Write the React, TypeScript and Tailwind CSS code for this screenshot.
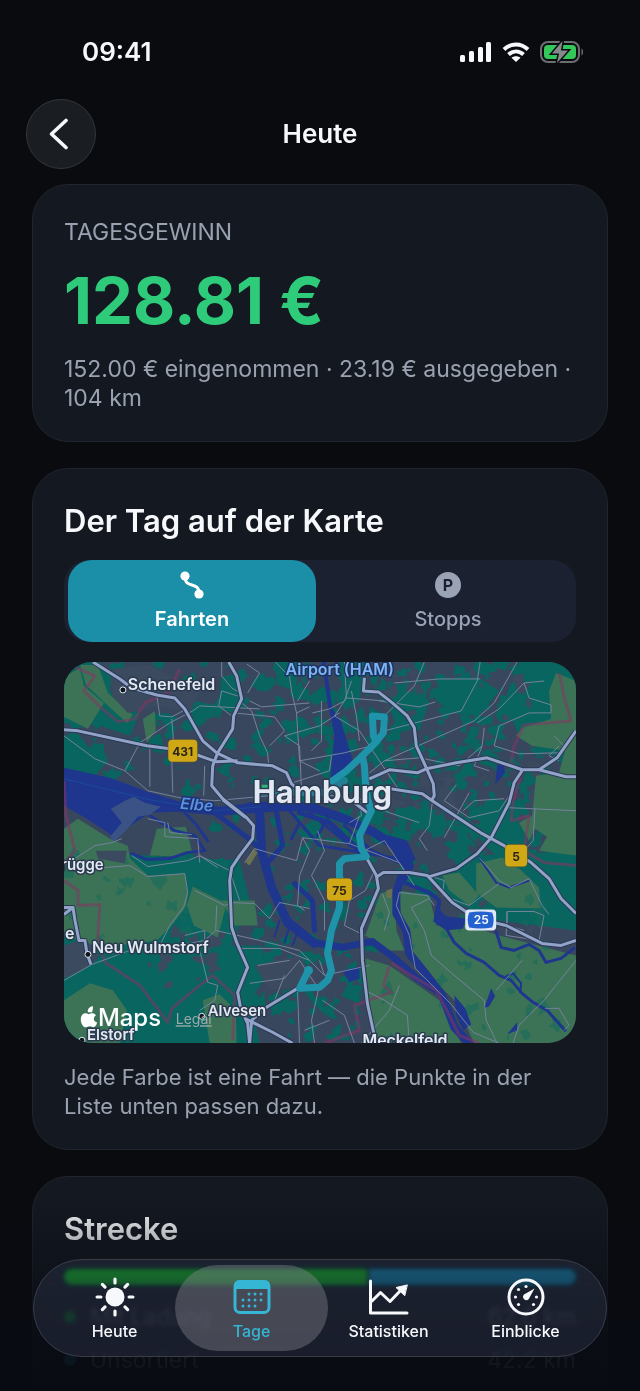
import { ReactNode, useState } from 'react';
import clsx from 'clsx';

type Point = [number, number];

interface PatchArea {
  seed: number;
  count: number;
  x: number;
  y: number;
  w: number;
  h: number;
  size: number;
}

// Small seeded generator so the parks look the same on every render
const random = (seed: number) => () => {
  seed = (seed * 16807) % 2147483647;
  return seed / 2147483647;
};

const makePatches = ({ seed, count, x, y, w, h, size }: PatchArea): string => {
  const next = random(seed);
  let d = '';
  for (let i = 0; i < count; i++) {
    const cx = x + next() * w;
    const cy = y + next() * h;
    const r = size * (0.3 + next() * 1.1);
    const points: Point[] = [];
    for (let k = 0; k < 9; k++) {
      const angle = (k / 9) * Math.PI * 2;
      const dist = r * (0.3 + next());
      points.push([Math.round(cx + Math.cos(angle) * dist), Math.round(cy + Math.sin(angle) * dist)]);
    }
    d += `M${points.map((p) => p.join(' ')).join('L')}Z`;
  }
  return d;
};

const parks = [
  { seed: 811, count: 110, x: 64, y: 661, w: 250, h: 130, size: 7 },
  { seed: 4207, count: 330, x: 300, y: 661, w: 277, h: 180, size: 7 },
  { seed: 991, count: 70, x: 180, y: 810, w: 210, h: 130, size: 6 },
  { seed: 5501, count: 60, x: 400, y: 810, w: 150, h: 90, size: 9 },
  { seed: 377, count: 70, x: 250, y: 940, w: 130, h: 103, size: 7 },
].map(makePatches);

const meadowPatches = [
  { seed: 1203, count: 20, x: 64, y: 850, w: 130, h: 90, size: 6 },
  { seed: 7207, count: 36, x: 380, y: 900, w: 190, h: 140, size: 6 },
].map(makePatches);

const townPatches = [
  { seed: 613, count: 14, x: 150, y: 920, w: 80, h: 70, size: 7 },
  { seed: 2909, count: 14, x: 420, y: 890, w: 150, h: 120, size: 6 },
  { seed: 4211, count: 40, x: 380, y: 670, w: 180, h: 150, size: 8 },
].map(makePatches);

const woods = [
  'M64 735L78 733L90 748L102 745L108 760L95 775L64 768Z',
  'M64 661L100 661L112 672L110 690L140 712L130 735L100 725L64 722Z',
  'M64 850L240 860L250 900L225 960L245 1000L240 1043L64 1043Z',
  'M215 945L262 945L268 975L250 1000L260 1043L200 1043Z',
  'M222 676L240 672L240 700L232 712L218 706Z',
  'M196 700L214 704L216 716L198 720L188 708Z',
  'M275 661L300 661L296 690L278 684Z',
  'M435 880L480 855L577 850L577 930L500 920L450 900Z',
  'M385 690L410 680L430 700L420 730L400 722Z',
  'M520 661L577 661L577 760L548 752L520 735L505 700Z',
  'M486 800L530 800L527 860L500 860L478 835Z',
  'M430 690L470 670L500 690L480 715L450 712Z',
  'M340 661L365 661L360 700L345 710Z',
];

const meadows = [
  'M64 676L80 667L84 685L104 702L88 728L64 716Z',
  'M80 664L98 664L108 692L133 714L127 722L104 701L86 684Z',
  'M143 718L155 710L156 730L147 742Z',
  'M64 828L78 818L110 838L128 845L130 858L148 875L185 873L188 895L186 907L170 927L157 940L100 947L64 935Z',
  'M157 828L186 826L192 850L180 856L150 855Z',
  'M193 886L227 903L218 937L194 925L187 905Z',
  'M222 900L255 900L258 925L235 925Z',
  'M64 1000L90 983L113 990L127 1010L120 1043L64 1043Z',
  'M203 1000L220 994L236 1010L237 1043L210 1043Z',
  'M400 890L430 895L437 925L470 925L500 935L577 955L577 1043L475 1043L455 1000L425 970L410 945L402 920Z',
  'M381 893L395 889L397 930L405 950L390 950L366 935Z',
  'M366 958L390 965L440 1000L462 1043L377 1043L368 1000Z',
  'M557 672L577 680L577 855L540 850L548 836L536 828L530 840L520 822L533 815L537 775L560 772L566 750L533 745L517 735L523 727L552 718L550 690Z',
  'M477 863L503 857L520 868L540 887L542 908L497 907L477 892Z',
  'M443 875L460 872L480 895L470 905L450 890Z',
];

const waterAreas = [
  'M64 767L110 777L148 791L180 801L220 806L262 801L300 801L300 808L262 812L220 815L177 811L150 812L132 824L114 836L87 818L64 805Z',
  'M328 700L336 712L342 722L348 742L354 762L342 778L331 776L335 735Z',
  'M496 784L498 765L504 760L506 772Z',
  'M437 905L447 916L466 918L464 928L447 930L434 921Z',
  'M455 995L466 1008L472 1024L464 1030L457 1015Z',
  'M485 1008L492 988L496 996L490 1006Z',
  'M508 1034L518 1022L518 1030Z',
  'M343 970L360 966L360 978L350 982Z',
  'M388 834L408 840L416 858L408 870L398 862Z',
];

const rivers = [
  { width: 9, d: 'M250 806L310 806L345 818L375 832L400 848L410 866L402 880' },
  { width: 8, d: 'M402 876L397 892L397 913L407 930L410 953L427 974L443 995L455 1027L470 1043' },
  { width: 7, d: 'M288 920L315 942L343 947L373 941L393 956L417 977L440 992' },
  { width: 9, d: 'M260 812L262 850L272 887L288 922L315 943' },
  { width: 5, d: 'M215 812L248 837L262 850' },
  { width: 5, d: 'M277 812L283 845L270 860M295 883L313 900L315 930M300 812L330 822L360 850' },
  { width: 3, d: 'M290 810L320 845L400 858M330 815L318 835M345 825L372 850L400 862M300 822L292 838M310 812L352 846' },
  { width: 4, d: 'M400 880L430 892L440 900L438 915' },
  { width: 4, d: 'M324 661L327 680L331 708' },
  { width: 3, d: 'M132 853L147 859L170 858L187 852L205 850' },
  { width: 3, d: 'M447 928L455 942L467 953L485 962L500 975L512 980L523 993L534 1002L548 1010L566 1030' },
  { width: 3, d: 'M497 931L502 947L515 950L530 944L540 950L547 962L562 958L575 948' },
  { width: 2, d: 'M507 976L514 973L522 983L521 992' },
  { width: 2, d: 'M480 857L497 882L510 887L530 880' },
  { width: 3, d: 'M150 815L175 830L195 835L205 850M185 812L195 822L208 840' },
  { width: 2, d: 'M280 920L275 936M290 925L285 942M298 932L293 945' },
];

const sideRoads = [
  'M64 735L95 758L125 770L148 790L180 797L215 800L270 795L300 799',
  'M125 770L140 742L170 722L193 710L200 705L260 708',
  'M222 661L222 675L232 687L242 693L242 702L252 710L260 735L268 752L269 763',
  'M157 695L160 715L172 716L185 709M172 718L174 745M150 743L150 786M172 760L173 792M205 765L204 795',
  'M234 712L275 716L285 730L270 745M250 700L262 706L310 702M247 663L260 672L248 692',
  'M222 690L238 695M222 690L219 705L232 715',
  'M276 661L290 676L292 690L297 712L310 706M310 680L298 700M297 712L300 760L320 770',
  'M300 745L285 735L320 725L340 712M300 760L345 752L372 745',
  'M322 700L322 740L312 750M313 712L330 708L345 700L352 680',
  'M345 661L347 697L335 715L360 730L372 748L400 790',
  'M352 690L357 715L360 740M347 697L385 700',
  'M425 661L415 685L385 715M395 682L440 678L481 678M481 661L478 680L462 710L385 730',
  'M518 661L495 702L475 720L430 740L385 760L370 772',
  'M545 680L525 682L500 708L478 722M525 682L530 697L552 704L552 712L530 712L500 725',
  'M500 725L495 745L520 753L560 752M485 727L483 745L475 765L490 770',
  'M385 760L420 757L460 765L483 745M380 700L420 706L436 701',
  'M433 802L430 825L420 838L428 850M457 784L445 800L470 817L500 810L512 792',
  'M445 837L470 792M464 810L475 800L505 798M536 807L534 840L525 850M510 807L577 810',
  'M315 793L360 798L362 815L350 822M360 798L390 812L420 822',
  'M302 790L300 745M290 783L330 770L332 755',
  'M303 837L350 843L360 815M303 837L297 860L255 848L245 862',
  'M303 837L310 850L300 875L298 905L305 910M318 830L325 850L312 875L325 900L325 930',
  'M340 865L350 900L345 925L365 935M350 900L366 890L375 870',
  'M350 843L400 862L415 885M365 850L385 840L405 870',
  'M64 865L95 845L112 842L122 838M132 855L148 866L188 860L200 855L218 867',
  'M90 868L130 865L148 876L185 873L188 892L184 906L170 925L160 945L130 950L92 964L64 980',
  'M148 818L165 822L165 836L198 838L200 862M168 822L170 832L192 834',
  'M185 935L205 930L205 940L180 945L163 950M200 855L230 870L240 900',
  'M195 890L225 905L232 902L255 903L270 918L280 902L310 908',
  'M216 930L260 940L300 950L325 975M240 948L280 948L310 960',
  'M200 950L208 982L218 985L215 1000L200 1010M205 940L216 930L217 905',
  'M250 983L285 978L300 960L320 990M258 965L290 960M275 1000L285 975M298 990L300 1043M320 985L312 1020L315 1043',
  'M323 1000L345 1015L355 1043M305 1030L330 1020M320 960L325 975L370 965',
  'M383 893L390 912L385 930M400 892L428 895L435 905M400 892L397 905L410 935L416 968L440 992L452 1004L474 1032L500 1043',
  'M412 907L430 898M412 907L425 930L432 955L455 975L485 1000L487 1020L498 1043',
  'M430 875L445 880L443 895L470 905L500 883M480 857L500 880L512 887L530 878L543 905L550 914',
  'M508 911L535 911L545 915L540 940L507 935ZM508 911L508 925L525 930M577 960L545 1000L520 1025L514 1043',
  'M497 990L510 975L523 960M546 1008L560 1008L570 1025L565 1030M366 990L385 1000L408 1015L410 1043',
  'M362 1043L390 1010L400 985M560 745L550 755L560 760M555 735L565 745',
];

const mainRoads = [
  'M93 661L120 678L132 687L157 694L175 697L185 708L203 740L217 752L238 762L273 765L287 772L292 783L300 790',
  'M64 729L78 730L147 745L170 748L200 755L217 761L238 760',
  'M229 661L237 675L242 698L234 715L233 728L218 752L213 765L212 785L223 798L247 817L254 825L253 838L240 855L232 867L230 880L232 927L237 942L248 967L238 992L241 1008L248 1023L250 1043',
  'M223 799L246 817',
  'M365 677L364 690L379 691L393 702L408 715L415 727L417 745L427 767L434 783L435 795L432 800',
  'M370 778L390 769L418 772L427 768L457 762L488 757L523 769L540 769L567 776L577 776',
  'M540 769L558 757L577 730',
  'M523 770L515 782L510 802L492 837L478 853L457 868L430 876',
  'M385 787L423 793L433 800L483 833L505 845L532 862L550 878L562 898L577 913',
  'M378 876L384 872L410 872L428 875L453 902L477 918L507 925L543 943L562 945L577 940',
  'M355 802L368 812M367 857L377 875L379 888L362 928L363 960L368 1003L375 1036',
  'M298 988L267 1007L252 1020L250 1043M245 1018L273 1032L293 1043',
  'M64 907L73 907L64 914M73 907L75 920L79 940L85 940L87 953L91 964',
];

const borders = [
  'M70 664L95 675L84 690L100 706L118 721L135 718L145 702L168 692L180 668',
  'M64 880L78 890L78 905L100 904L98 935L105 962L140 985L168 1022L172 1008L200 985L213 975L235 995L233 1040',
  'M560 672L566 700L572 720L525 724L515 745L512 762L523 770L514 800L512 820L530 815L525 850L545 862L577 865',
  'M390 966L384 985L392 992L355 1005L360 1030L325 1043',
  'M392 962L412 975L437 990L450 1015L460 1035L480 1043',
  'M64 780L66 815L75 850L66 860',
];

const route =
  'M309 970L300 988L320 987L328 980L332 970L328 953L332 930L340 907L340 863L345 858L367 856L362 848L360 835L372 810L368 798L366 782L365 765L363 755';
const routeLoop = 'M333 780L347 770L363 755L375 743L384 732L385 716L373 715L374 735L377 741';

interface ShieldProps {
  x: number;
  y: number;
  width: number;
  label: string;
}

function RoadShield({ x, y, width, label }: ShieldProps) {
  return (
    <g>
      <rect x={x - width / 2} y={y - 11} width={width} height="22" rx="4" fill="#d0a714" stroke="#5c5227" strokeWidth="1" />
      <text x={x} y={y + 5} textAnchor="middle" fill="#2a2718" fontSize="12" fontWeight="700" stroke="none">
        {label}
      </text>
    </g>
  );
}

function DayMap() {
  return (
    <svg
      viewBox="64 661 513 382"
      className="mt-5 block w-full rounded-[28px] bg-[#39475e]"
      role="img"
      aria-label="Karte von Hamburg mit den Fahrten des Tages"
    >
      <g fill="#08655f">
        {woods.map((d) => <path key={d} d={d} />)}
        {parks.map((d) => <path key={d} d={d} />)}
      </g>
      <g fill="#3b4a5f">
        {townPatches.map((d) => <path key={d} d={d} />)}
      </g>
      <g fill="#3c7357">
        {meadows.map((d) => <path key={d} d={d} />)}
      </g>
      <g fill="#166a5c">
        {meadowPatches.map((d) => <path key={d} d={d} opacity="0.6" />)}
      </g>
      <g fill="#3b4a5f">
        <path d="M64 945L85 938L100 955L92 964L64 978ZM96 850L127 850L125 863L98 858ZM255 965L300 955L320 985L270 990Z" />
        <path d="M110 668L150 664L200 690L190 712L160 705L128 712L112 695Z" />
      </g>

      <g fill="#1e368d">
        {waterAreas.map((d) => <path key={d} d={d} />)}
      </g>
      <g fill="none" stroke="#1e368d" strokeLinejoin="round" strokeLinecap="round">
        {rivers.map((r) => <path key={r.d} d={r.d} strokeWidth={r.width} />)}
      </g>
      <path
        d="M111 808L125 800L134 796L145 802L161 806L150 814L138 816L126 830L114 841L110 836L122 822Z"
        fill="#3a5285"
      />
      <path d="M64 778L150 799L215 810L262 806" fill="none" stroke="#1b4a9c" />
      <path d="M246 862L254 848L258 852L250 865ZM387 890L393 888L392 898L387 897Z" fill="#6b714f" />

      <g fill="none" stroke="#863464" strokeWidth="3" strokeLinejoin="round" opacity="0.55">
        {borders.map((d) => <path key={d} d={d} />)}
      </g>

      <g fill="none" stroke="#74839d" strokeLinejoin="round">
        {sideRoads.map((d) => <path key={d} d={d} />)}
      </g>
      <g fill="none" stroke="#2b3855" strokeWidth="5" strokeLinejoin="round">
        {mainRoads.map((d) => <path key={d} d={d} />)}
      </g>
      <g fill="none" stroke="#92a3c8" strokeWidth="3" strokeLinejoin="round">
        {mainRoads.map((d) => <path key={d} d={d} />)}
      </g>

      <g fill="none" stroke="#1f93a9" strokeWidth="7" strokeLinejoin="round" strokeLinecap="round">
        <path d="M257 791L325 792L345 780" opacity="0.7" />
        <path d={route} />
        <path d={routeLoop} />
      </g>
      <circle cx="309" cy="970" r="4.5" fill="#1f93a9" />
      <path d="M262 784H269V790H262Z" fill="#2bb673" />

      <g
        fontFamily="Inter, 'Liberation Sans', sans-serif"
        fontSize="16"
        fontWeight="600"
        fill="#e3e9f2"
        stroke="#2b3a4f"
        strokeWidth="3"
        strokeLinejoin="round"
        paintOrder="stroke"
      >
        <text x="128" y="689">Schenefeld</text>
        <text x="61" y="869" fontSize="15">rügge</text>
        <text x="65" y="939">e</text>
        <text x="92" y="953">Neu Wulmstorf</text>
        <text x="208" y="1016" fontSize="15">Alvesen</text>
        <text x="87" y="1040" fontSize="15">Elstorf</text>
        <text x="363" y="1046">Meckelfeld</text>
        <text x="286" y="674" fill="#7db4f5" stroke="#1f3360">Airport (HAM)</text>
        <text x="180" y="808" fill="#5b92e0" stroke="#1c3175" fontStyle="italic" transform="rotate(5 180 808)">Elbe</text>
        <text x="253" y="802" fontSize="31" fontWeight="700">Hamburg</text>
        <RoadShield x={183} y={750} width={29} label="431" />
        <RoadShield x={340} y={889} width={25} label="75" />
        <RoadShield x={517} y={855} width={22} label="5" />
        <rect x="466" y="909" width="31" height="21" rx="4" fill="#dfe8f7" stroke="none" />
        <path d="M470 912Q481 910 493 912Q496 919 493 927Q481 929 470 927Q467 919 470 912Z" fill="#2462cf" stroke="none" />
        <text x="482" y="924" textAnchor="middle" fontSize="12" fill="#ffffff" stroke="none">25</text>
      </g>
      <g fill="#10151c" stroke="#e3e9f2">
        <circle cx="123" cy="689" r="3" />
        <circle cx="88" cy="954" r="3" />
        <circle cx="202" cy="1016" r="3" />
        <circle cx="82" cy="1040" r="3" />
      </g>

      <g fill="#ffffff" fontFamily="Inter, 'Liberation Sans', sans-serif">
        <path d="M92 1012C93 1010 93 1008 93 1006C90 1006 87 1009 88 1012C90 1012 91 1012 92 1012ZM96 1015C94 1012 90 1013 89 1014C87 1013 84 1012 82 1015C79 1019 82 1027 86 1027C88 1027 88 1026 90 1026C92 1026 92 1027 94 1027C96 1026 97 1024 97 1022C93 1021 93 1017 96 1015Z" />
        <text x="98" y="1026" fontSize="24" fontWeight="500">Maps</text>
        <text x="176" y="1024" fontSize="14" fill="#9aa9a9" textDecoration="underline">Legal</text>
      </g>
    </svg>
  );
}

function StatusBar() {
  return (
    <div className="flex h-[99px] items-center justify-between pt-1 pr-14 pl-[82px]">
      <span className="text-[26px] leading-8 font-semibold">09:41</span>
      <div className="flex items-center gap-2.5">
        <svg className="h-5 w-8" viewBox="0 0 32 20" fill="currentColor">
          <rect x="0" y="13" width="5" height="7" rx="1.5" />
          <rect x="9" y="9" width="5" height="11" rx="1.5" />
          <rect x="18" y="5" width="5" height="15" rx="1.5" />
          <rect x="26" y="0" width="5" height="20" rx="1.5" />
        </svg>
        <svg className="h-5 w-7" viewBox="0 0 28 20" fill="none" stroke="currentColor" strokeWidth="4">
          <path d="M2 7.5C9 0.8 19 0.8 26 7.5" />
          <path d="M6.5 12.5C11 8.5 17 8.5 21.5 12.5" />
          <path d="M14 20L9.5 15.8C12 13.8 16 13.8 18.5 15.8Z" fill="currentColor" stroke="none" />
        </svg>
        <svg className="h-6 w-11" viewBox="0 0 44 24" fill="none">
          <rect x="1" y="2" width="38" height="20" rx="7" stroke="#6c6e72" strokeWidth="2" />
          <path d="M41.5 8.5C43.6 9.5 43.6 14.5 41.5 15.5Z" fill="#6c6e72" />
          <rect x="4" y="5" width="32" height="14" rx="4" fill="#34c759" />
          <path
            d="M22.5 1L12 13.5H19L17 23L28 10.5H21Z"
            fill="#85888c"
            stroke="#090b0f"
            strokeWidth="3"
            paintOrder="stroke"
          />
        </svg>
      </div>
    </div>
  );
}

function Card({ children }: { children: ReactNode }) {
  return (
    <section className="rounded-[36px] border border-[#20252e] bg-[#141921] px-[31px] pt-8 pb-7">
      {children}
    </section>
  );
}

const views = [
  {
    id: 'fahrten',
    label: 'Fahrten',
    icon: (
      <svg className="size-8" viewBox="0 0 32 32" fill="none">
        <path d="M9 8C9 20 23 12 23 24" stroke="currentColor" strokeWidth="3" />
        <circle cx="9" cy="7" r="4.6" fill="currentColor" />
        <circle cx="23" cy="25" r="4.6" fill="currentColor" />
      </svg>
    ),
  },
  {
    id: 'stopps',
    label: 'Stopps',
    icon: (
      <span className="my-[3px] flex size-[26px] items-center justify-center rounded-full bg-[#9aa3b5] text-base font-bold text-[#1b2130]">
        P
      </span>
    ),
  },
];

const distances = [
  { label: 'Mit Ladung', km: 62.0, dot: 'bg-[#22c55e]', bar: 'bg-[#00d35a]' },
  { label: 'Unsortiert', km: 42.2, dot: 'bg-[#1b8fa8]', bar: 'bg-[#0098b8]' },
];

const rays = [0, 45, 90, 135, 180, 225, 270, 315];

const tabs = [
  {
    label: 'Heute',
    icon: (
      <svg className="size-10" viewBox="0 0 40 40" fill="currentColor">
        <circle cx="20" cy="20" r="9.5" />
        {rays.map((angle) => (
          <rect key={angle} x="18.4" y="0.5" width="3.2" height="7" rx="1.6" transform={`rotate(${angle} 20 20)`} />
        ))}
      </svg>
    ),
  },
  {
    label: 'Tage',
    icon: (
      <svg className="size-10" viewBox="0 0 40 40">
        <rect x="3" y="4.5" width="34" height="31" rx="5" fill="none" stroke="currentColor" strokeWidth="3" />
        <path d="M2 12V9Q2 3 8 3H32Q38 3 38 9V12Z" fill="currentColor" />
        <g fill="currentColor">
          {[17, 23, 29].map((y, row) =>
            [11, 17, 23, 29].map((x, col) =>
              (row === 0 && col === 0) || (row === 2 && col === 3) ? null : (
                <circle key={`${x}-${y}`} cx={x} cy={y} r="1.5" />
              )
            )
          )}
        </g>
      </svg>
    ),
  },
  {
    label: 'Statistiken',
    icon: (
      <svg className="size-10" viewBox="0 0 40 40" fill="none" stroke="currentColor" strokeWidth="3" strokeLinecap="round" strokeLinejoin="round">
        <path d="M1.5 4V36H38" />
        <path d="M3 24L11.5 15.5L21 24.5L33 12" />
        <path d="M38 8L27 10.5L35.5 18.5Z" fill="currentColor" strokeWidth="1" />
      </svg>
    ),
  },
  {
    label: 'Einblicke',
    icon: (
      <svg className="size-10" viewBox="0 0 40 40" fill="currentColor">
        <circle cx="20" cy="20" r="17" fill="none" stroke="currentColor" strokeWidth="3" />
        <circle cx="20" cy="9.5" r="1.6" />
        <circle cx="12.5" cy="12.5" r="1.6" />
        <circle cx="9.5" cy="20" r="1.6" />
        <circle cx="12.5" cy="27.5" r="1.6" />
        <circle cx="27.5" cy="27.5" r="1.6" />
        <circle cx="30.5" cy="20" r="1.6" />
        <path d="M28.5 11.5L22.8 22A3.2 3.2 0 1 1 18 17.5Z" />
      </svg>
    ),
  },
];

export default function App() {
  const [view, setView] = useState('fahrten');
  const [tab, setTab] = useState('Tage');
  const total = distances.reduce((sum, d) => sum + d.km, 0);

  return (
    <div className="relative flex h-screen flex-col overflow-hidden bg-[#090b0f] font-['Inter','Liberation_Sans',sans-serif] text-[#f6f8fb]">
      <StatusBar />

      <header className="grid grid-cols-[1fr_auto_1fr] items-center px-[26px]">
        <button
          type="button"
          aria-label="Zurück"
          className="flex size-[70px] items-center justify-center rounded-full border border-[#33373c] bg-[#1a1d21]"
        >
          <svg className="-ml-1 size-8" viewBox="0 0 32 32" fill="none" stroke="currentColor" strokeWidth="3.6" strokeLinecap="round" strokeLinejoin="round">
            <path d="M23 2.5L8.5 16L23 29.5" />
          </svg>
        </button>
        <h1 className="text-[26px] leading-8 font-semibold">Heute</h1>
      </header>

      <main className="mt-[15px] flex min-h-0 flex-1 flex-col gap-[26px] overflow-y-auto px-8 [scrollbar-width:none] *:shrink-0">
        <Card>
          <h2 className="text-[23px] leading-[30px] text-[#9aa2b1]">TAGESGEWINN</h2>
          <p className="my-4 text-[65px] leading-[76px] font-bold text-[#2ecc7a]">128.81 €</p>
          <p className="text-[23px] leading-[29px] text-[#9aa2b1]">
            152.00 € eingenommen · 23.19 € ausgegeben · 104 km
          </p>
        </Card>

        <Card>
          <h2 className="text-[31px] leading-10 font-semibold">Der Tag auf der Karte</h2>
          <div className="mt-[19px] flex h-[82px] gap-2 rounded-[24px] bg-[#1b2130] px-1">
            {views.map((v) => (
              <button
                key={v.id}
                type="button"
                aria-pressed={view === v.id}
                onClick={() => setView(v.id)}
                className={clsx(
                  'flex flex-1 flex-col items-center justify-center gap-1 rounded-[24px] text-xl leading-7',
                  view === v.id ? 'bg-[#1c8fa8] font-semibold text-white' : 'font-medium text-[#9aa3b5]'
                )}
              >
                {v.icon}
                {v.label}
              </button>
            ))}
          </div>
          <DayMap />
          <p className="mt-5 text-[22px] leading-[29px] text-[#9aa2b1]">
            Jede Farbe ist eine Fahrt — die Punkte in der Liste unten passen dazu.
          </p>
        </Card>

        <Card>
          <h2 className="text-[31px] leading-10 font-semibold">Strecke</h2>
          <div className="mt-5 flex h-4 gap-0.5 overflow-hidden rounded-full">
            {distances.map((d) => (
              <div key={d.label} className={d.bar} style={{ width: `${(d.km / total) * 100}%` }} />
            ))}
          </div>
          <ul className="mt-2.5">
            {distances.map((d) => (
              <li key={d.label} className="flex h-[43px] items-center text-[23px] text-[#9aa2b1]">
                <span className={clsx('mr-3.5 size-3 rounded-full', d.dot)} />
                {d.label}
                <span className="ml-auto">{d.km.toFixed(1)} km</span>
              </li>
            ))}
          </ul>
        </Card>
      </main>

      {/* Fade behind the tab bar */}
      <div className="pointer-events-none absolute inset-x-0 bottom-0 h-48 bg-linear-to-b from-transparent via-[#090b12]/80 via-60% to-[#090b12] to-100%" />

      <nav className="absolute inset-x-[33px] bottom-[34px] grid h-[98px] grid-cols-4 rounded-full border border-[#3a3d47] bg-[#2a2b35]/50 px-3 py-[5px] backdrop-blur-[2px] backdrop-brightness-125 backdrop-saturate-200">
        {tabs.map((t) => (
          <button
            key={t.label}
            type="button"
            aria-current={tab === t.label ? 'page' : undefined}
            onClick={() => setTab(t.label)}
            className={clsx(
              '-mx-2 flex flex-col items-center justify-center gap-0.5 rounded-full pt-1 text-base leading-6 font-medium',
              tab === t.label ? 'bg-[#8a8a92]/40 text-[#35b6d4]' : 'text-[#f6f8fb]'
            )}
          >
            {t.icon}
            {t.label}
          </button>
        ))}
      </nav>
    </div>
  );
}
